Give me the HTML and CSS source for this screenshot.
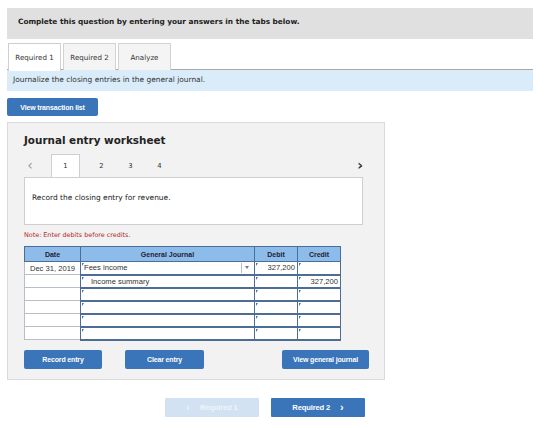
FILE: index.html
```html
<!DOCTYPE html>
<html>
<head>
<meta charset="utf-8">
<link rel="stylesheet" href="styles.css">
</head>
<body>
<div class="page">
  <div class="header">Complete this question by entering your answers in the tabs below.</div>
  <div class="tabs">
    <div class="tab active">Required 1</div>
    <div class="tab">Required 2</div>
    <div class="tab">Analyze</div>
  </div>
  <div class="info">Journalize the closing entries in the general journal.</div>
  <div class="btn-row"><div class="btn btn-view">View transaction list</div></div>

  <div class="panel">
    <div class="title">Journal entry worksheet</div>
    <div class="nav">
      <div class="nav-prev">&lsaquo;</div>
      <div class="nav-item current">1</div>
      <div class="nav-item">2</div>
      <div class="nav-item">3</div>
      <div class="nav-item">4</div>
      <div class="nav-next">&rsaquo;</div>
    </div>
    <div class="content">Record the closing entry for revenue.</div>
    <div class="note">Note: Enter debits before credits.</div>

    <table class="journal">
      <colgroup>
        <col class="c-date"><col class="c-gj"><col class="c-num"><col class="c-num">
      </colgroup>
      <thead>
        <tr><th>Date</th><th>General Journal</th><th>Debit</th><th>Credit</th></tr>
      </thead>
      <tbody>
        <tr>
          <td class="date">Dec 31, 2019</td>
          <td class="in gj"><span class="acct">Fees income</span><span class="dd"></span></td>
          <td class="in num">327,200</td>
          <td class="in num"></td>
        </tr>
        <tr>
          <td class="date"></td>
          <td class="in gj"><span class="acct indent">Income summary</span></td>
          <td class="in num"></td>
          <td class="in num">327,200</td>
        </tr>
        <tr><td class="date"></td><td class="in gj"></td><td class="in num"></td><td class="in num"></td></tr>
        <tr><td class="date"></td><td class="in gj"></td><td class="in num"></td><td class="in num"></td></tr>
        <tr><td class="date"></td><td class="in gj"></td><td class="in num"></td><td class="in num"></td></tr>
        <tr><td class="date"></td><td class="in gj"></td><td class="in num"></td><td class="in num"></td></tr>
      </tbody>
    </table>

    <div class="actions">
      <div class="btn btn-record">Record entry</div>
      <div class="btn btn-clear">Clear entry</div>
      <div class="btn btn-gj">View general journal</div>
    </div>
  </div>

  <div class="footer-nav">
    <div class="btn btn-big disabled"><span class="chev">&lsaquo;</span>Required 1</div>
    <div class="btn btn-big">Required 2<span class="chev right">&rsaquo;</span></div>
  </div>
</div>
</body>
</html>
```

FILE: styles.css
```css
* { box-sizing: border-box; }
html, body { margin: 0; padding: 0; background: #fff; }
body { font-family: "DejaVu Sans", Verdana, sans-serif; color: #222; }

.page { padding: 8px 27px 0 7px; width: 560px; }

.header {
  height: 31px;
  background: #e0e0e0;
  padding-left: 11px;
  font-weight: bold;
  font-size: 7.35px;
  line-height: 28px;
  color: #222;
}

.tabs {
  display: flex;
  gap: 2px;
  margin-top: 4px;
  padding-left: 1px;
  border-bottom: 1px solid #a8a8a8;
  height: 27px;
}
.tab {
  width: 53px;
  height: 27px;
  border: 1px solid #d2d2d2;
  border-bottom: none;
  background: #f4f4f4;
  font-size: 7.1px;
  display: flex;
  align-items: center;
  justify-content: center;
  color: #333;
  padding-top: 1px;
}
.tab.active { background: #fff; height: 28px; border-color: #cfcfcf; padding-top: 0; }

.info {
  height: 21px;
  background: #daebf9;
  padding-left: 6px;
  font-size: 7.45px;
  line-height: 20px;
  color: #333;
}

.btn-row { margin-top: 7px; }
.btn {
  background: #3a74b9;
  color: #fff;
  font-family: "Liberation Sans", Arial, sans-serif;
  font-weight: bold;
  font-size: 7px;
  border-radius: 2px;
  display: flex;
  align-items: center;
  justify-content: center;
  letter-spacing: -0.15px;
}
.btn-view { width: 91px; height: 18px; }

.panel {
  margin-top: 6px;
  width: 378px;
  height: 258px;
  background: #f2f2f2;
  border: 1px solid #dadada;
  padding: 10px 15px 0 16px;
}
.title {
  font-weight: bold;
  font-size: 10.4px;
  line-height: 14px;
  color: #222;
}

.nav {
  margin-top: 7px;
  height: 23px;
  display: flex;
  align-items: stretch;
  margin-right: 6px;
  font-size: 6.8px;
  color: #333;
}
.nav-prev {
  width: 12px;
  margin-right: 15px;
  font-size: 14px;
  color: #999;
  display: flex;
  align-items: center;
  justify-content: center;
  padding-bottom: 2px;
}
.nav-item {
  width: 29px;
  display: flex;
  align-items: center;
  justify-content: center;
}
.nav-item.current {
  background: #fff;
  border: 1px solid #cfcfcf;
  border-bottom: none;
  margin-right: 7px;
}
.nav-next {
  margin-left: auto;
  font-size: 14px;
  font-weight: bold;
  color: #333;
  display: flex;
  align-items: center;
  padding-bottom: 2px;
}

.content {
  height: 48px;
  margin-right: 6px;
  background: #fff;
  border: 1px solid #cfcfcf;
  padding: 15px 0 0 7px;
  font-size: 7.45px;
  line-height: 9px;
  color: #222;
}

.note {
  margin-top: 5px;
  font-size: 6.4px;
  line-height: 10px;
  color: #b3242a;
}

.journal {
  margin-top: 6px;
  width: 316px;
  border-collapse: collapse;
  table-layout: fixed;
  font-family: "Liberation Sans", Arial, sans-serif;
  font-size: 7.6px;
  color: #333;
}
.c-date { width: 56px; }
.c-gj { width: 174px; }
.c-num { width: 43px; }

.journal th {
  height: 15px;
  background: #8dbcea;
  border: 1px solid #4b6e98;
  font-weight: bold;
  font-size: 7px;
  color: #223;
  padding: 0;
}
.journal td {
  height: 13px;
  padding: 0 2px;
  position: relative;
  white-space: nowrap;
  overflow: hidden;
}
.journal td.date {
  background: #fff;
  border: 1px solid #b9bec6;
  text-align: center;
  border-right: none;
}
.journal td.in {
  background: #fff;
  border: 1px solid #4d6d94;
  border-bottom-width: 2px;
}
.journal td.in::before {
  content: "";
  position: absolute;
  left: 1px;
  top: 1px;
  border-top: 3px solid #3a74b9;
  border-right: 2px solid transparent;
}
.journal td.num { text-align: right; }
.acct { padding-left: 1px; }
.acct.indent { padding-left: 8px; }
.dd {
  position: absolute;
  right: 2px;
  top: 1px;
  width: 11px;
  height: 10px;
  border-left: 1px solid #b5bdc8;
}
.dd::after {
  content: "";
  position: absolute;
  left: 3px;
  top: 3px;
  border-top: 3px solid #6c7c90;
  border-left: 2.5px solid transparent;
  border-right: 2.5px solid transparent;
}

.actions {
  margin-top: 9px;
  display: flex;
}
.actions .btn { height: 19px; }
.btn-record { width: 78px; }
.btn-clear { width: 79px; margin-left: 23px; }
.btn-gj { width: 87px; margin-left: auto; }

.footer-nav {
  display: flex;
  gap: 12px;
  margin-top: 18px;
  padding-left: 158px;
}
.btn-big {
  width: 94px;
  height: 19px;
  font-size: 7.6px;
  border-radius: 1px;
}
.btn-big.disabled { background: #d3e2f3; color: #eef4fb; }
.chev { font-size: 11px; margin-right: 10px; padding-bottom: 2px; }
.chev.right { margin-right: 0; margin-left: 10px; }
```
